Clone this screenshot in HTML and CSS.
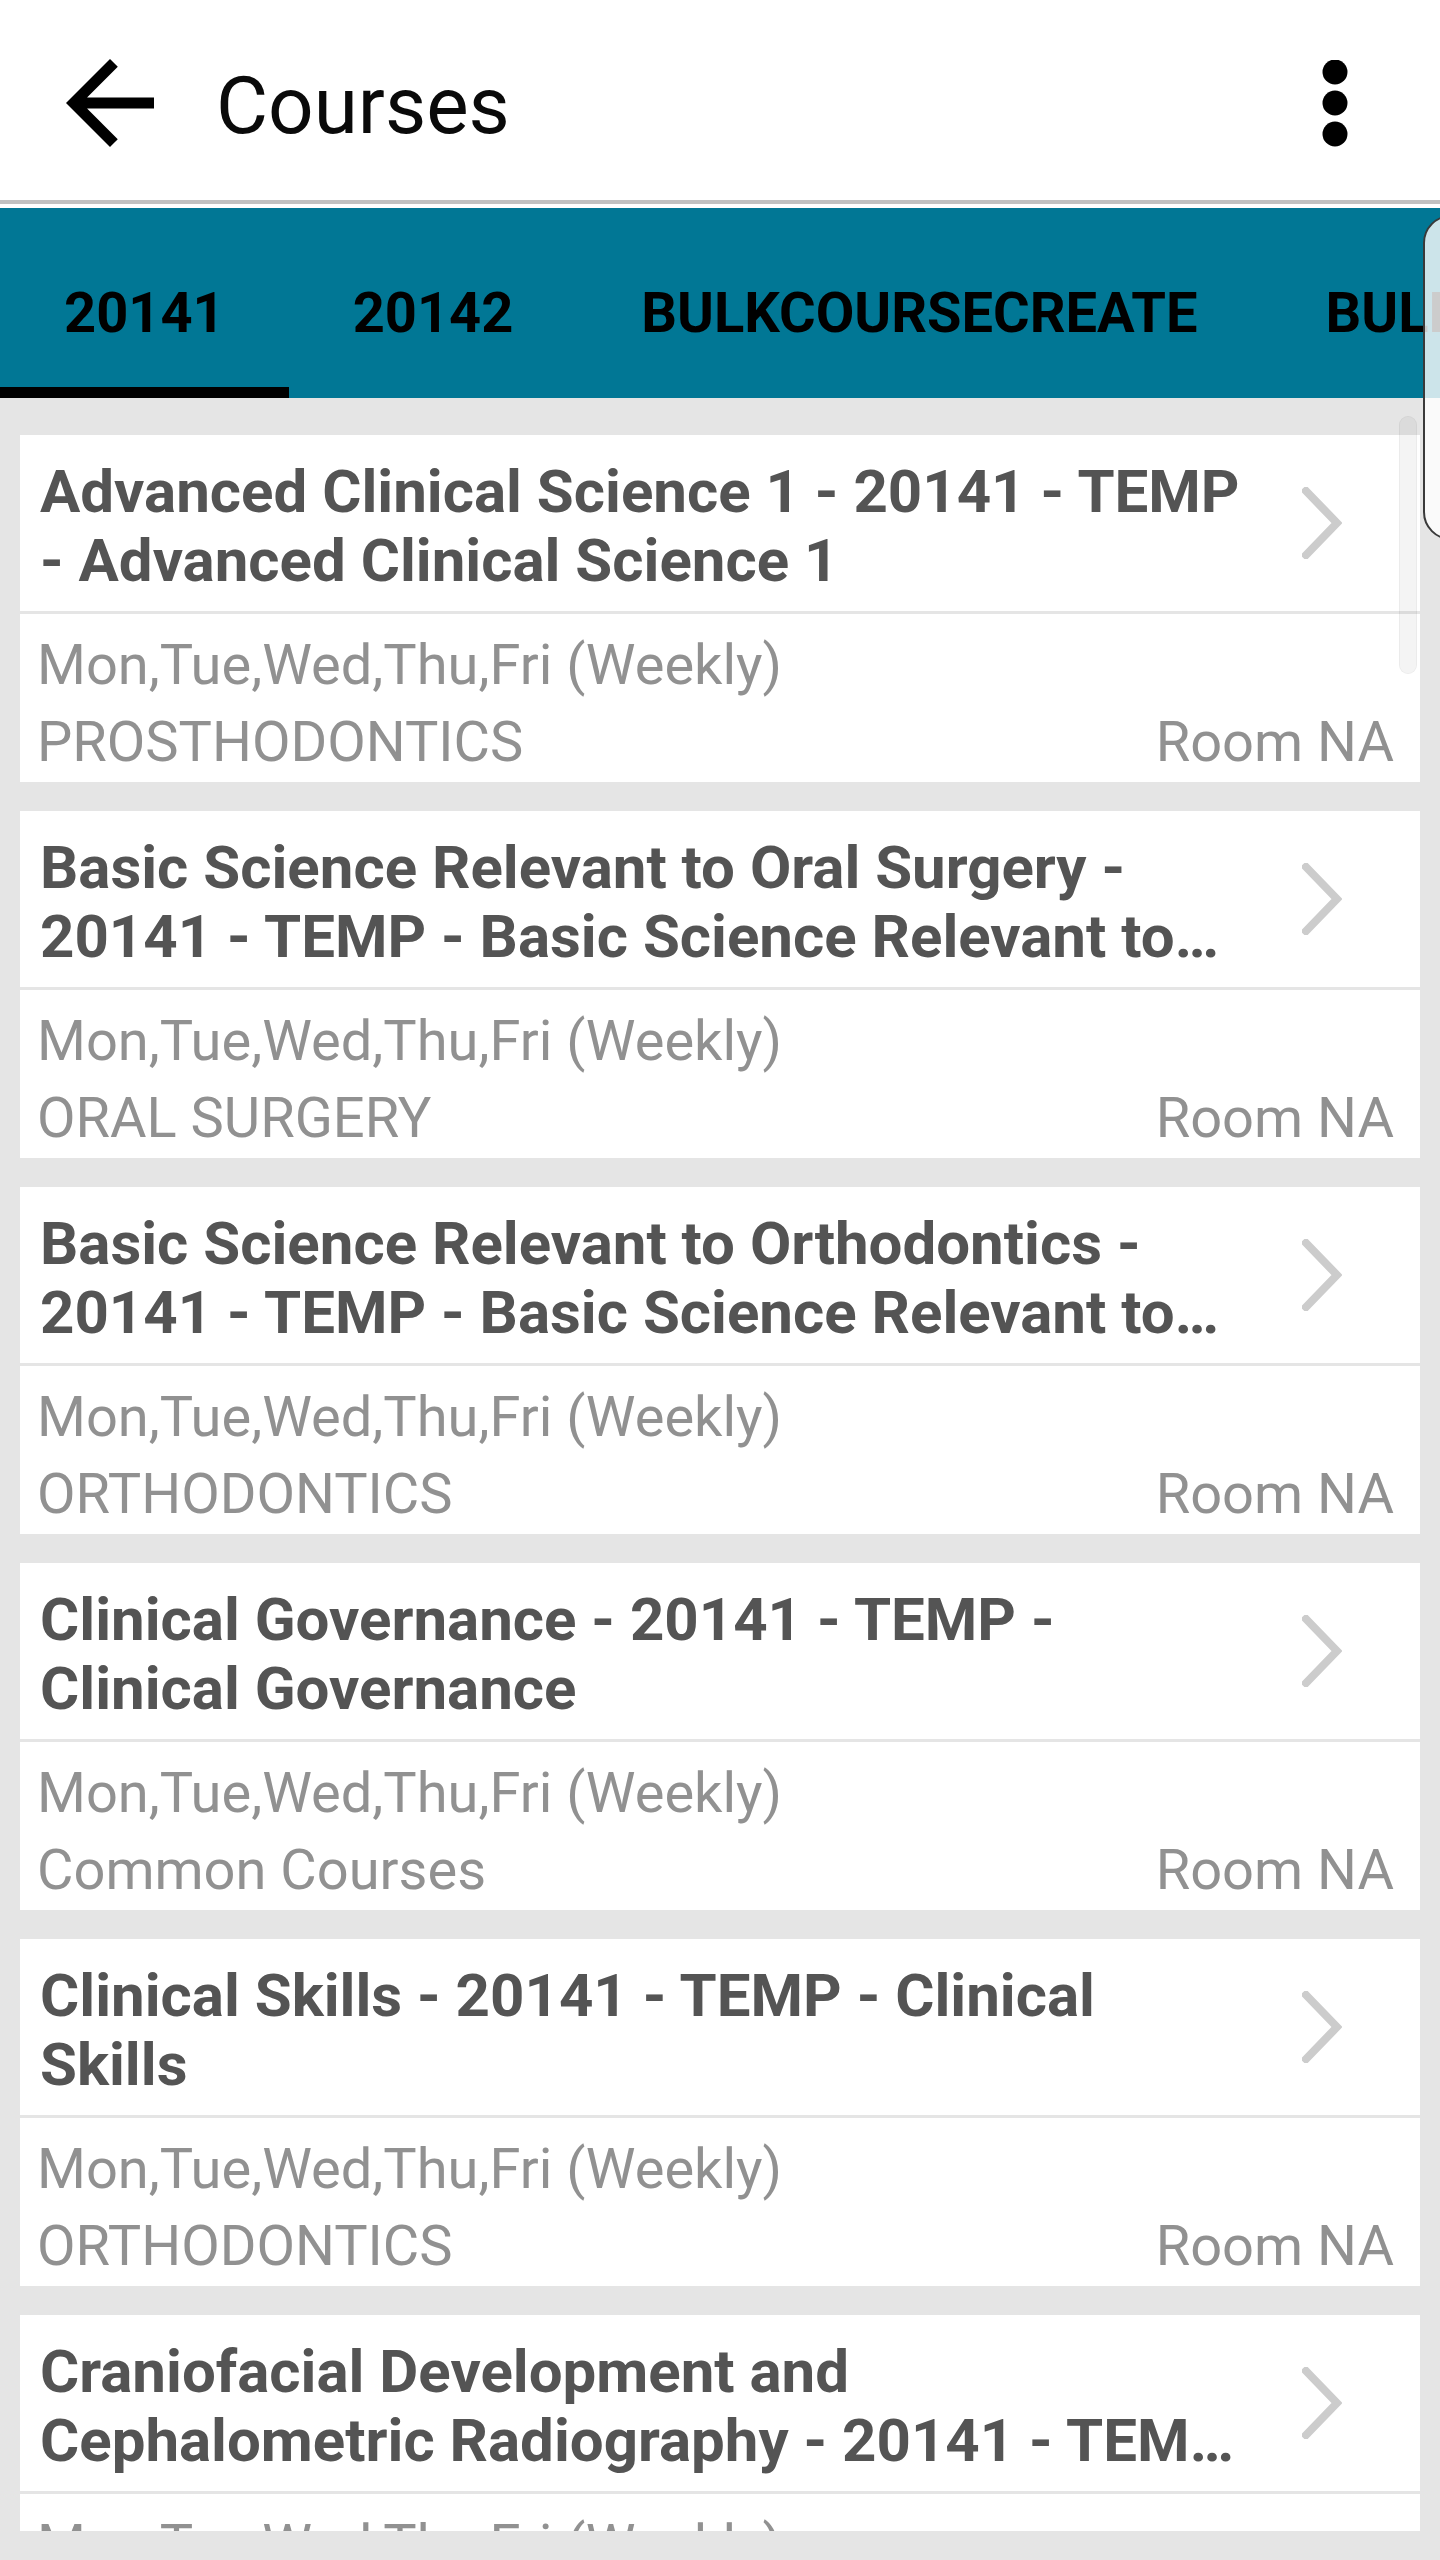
FILE: index.html
```html
<!DOCTYPE html>
<html lang="en">
<head>
<meta charset="utf-8">
<title>Courses</title>
<link rel="stylesheet" href="styles.css">
</head>
<body>
<div class="appbar">
  <header class="toolbar">
    <svg class="back" viewBox="0 0 24 24" aria-label="Back"><path d="M20 11H7.83l5.59-5.59L12 4l-8 8 8 8 1.41-1.41L7.83 13H20v-2z"/></svg>
    <h1 class="title">Courses</h1>
    <svg class="more" viewBox="0 0 26 88" aria-label="More"><circle cx="13" cy="12" r="12.5"/><circle cx="13" cy="43" r="12.5"/><circle cx="13" cy="74" r="12.5"/></svg>
  </header>
</div>
<nav class="tabs">
  <div class="tab active">20141</div>
  <div class="tab">20142</div>
  <div class="tab">BULKCOURSECREATE</div>
  <div class="tab">BULKCOURSECREATE2</div>
</nav>
<main class="list">
  <article class="card">
    <div class="card-head">
      <div class="card-title">Advanced Clinical Science 1 - 20141 - TEMP - Advanced Clinical Science 1</div>
      <div class="chev"><svg viewBox="0 0 40 72"><path d="M4 4 L35 36 L4 68"/></svg></div>
    </div>
    <div class="card-body">
      <div class="sched">Mon,Tue,Wed,Thu,Fri (Weekly)</div>
      <div class="meta"><span>PROSTHODONTICS</span><span>Room NA</span></div>
    </div>
  </article>
  <article class="card">
    <div class="card-head">
      <div class="card-title">Basic Science Relevant to Oral Surgery - 20141 - TEMP - Basic Science Relevant to Oral Surgery</div>
      <div class="chev"><svg viewBox="0 0 40 72"><path d="M4 4 L35 36 L4 68"/></svg></div>
    </div>
    <div class="card-body">
      <div class="sched">Mon,Tue,Wed,Thu,Fri (Weekly)</div>
      <div class="meta"><span>ORAL SURGERY</span><span>Room NA</span></div>
    </div>
  </article>
  <article class="card">
    <div class="card-head">
      <div class="card-title">Basic Science Relevant to Orthodontics - 20141 - TEMP - Basic Science Relevant to Orthodontics</div>
      <div class="chev"><svg viewBox="0 0 40 72"><path d="M4 4 L35 36 L4 68"/></svg></div>
    </div>
    <div class="card-body">
      <div class="sched">Mon,Tue,Wed,Thu,Fri (Weekly)</div>
      <div class="meta"><span>ORTHODONTICS</span><span>Room NA</span></div>
    </div>
  </article>
  <article class="card">
    <div class="card-head">
      <div class="card-title">Clinical Governance - 20141 - TEMP - Clinical Governance</div>
      <div class="chev"><svg viewBox="0 0 40 72"><path d="M4 4 L35 36 L4 68"/></svg></div>
    </div>
    <div class="card-body">
      <div class="sched">Mon,Tue,Wed,Thu,Fri (Weekly)</div>
      <div class="meta"><span>Common Courses</span><span>Room NA</span></div>
    </div>
  </article>
  <article class="card">
    <div class="card-head">
      <div class="card-title">Clinical Skills - 20141 - TEMP - Clinical Skills</div>
      <div class="chev"><svg viewBox="0 0 40 72"><path d="M4 4 L35 36 L4 68"/></svg></div>
    </div>
    <div class="card-body">
      <div class="sched">Mon,Tue,Wed,Thu,Fri (Weekly)</div>
      <div class="meta"><span>ORTHODONTICS</span><span>Room NA</span></div>
    </div>
  </article>
  <article class="card">
    <div class="card-head">
      <div class="card-title">Craniofacial Development and Cephalometric Radiography - 20141 - TEMP - Craniofacial Development and Cephalometric Radiography</div>
      <div class="chev"><svg viewBox="0 0 40 72"><path d="M4 4 L35 36 L4 68"/></svg></div>
    </div>
    <div class="card-body">
      <div class="sched">Mon,Tue,Wed,Thu,Fri (Weekly)</div>
      <div class="meta"><span>ORTHODONTICS</span><span>Room NA</span></div>
    </div>
  </article>
  <div class="scroll-thumb"></div>
</main>
<div class="edge-handle"></div>
</body>
</html>
```
FILE: styles.css
```css
* { box-sizing: border-box; }
html, body {
  margin: 0;
  padding: 0;
}
body {
  width: 1440px;
  height: 2560px;
  overflow: hidden;
  background: #e5e5e5;
  font-family: Roboto, "Noto Sans", "Liberation Sans", sans-serif;
  position: relative;
}
.appbar {
  background: #fff;
  padding-bottom: 4px;
}
.toolbar {
  height: 204px;
  border-bottom: 4px solid #c1c1c1;
  display: flex;
  align-items: center;
  padding: 0 0 0 44px;
}
.back {
  width: 132px;
  height: 132px;
  fill: #000;
  flex: none;
  margin-top: 6px;
}
.title {
  margin: 12px 0 0 40px;
  font-weight: 400;
  font-size: 80px;
  color: #0a0a0a;
  flex: 1;
  line-height: 1;
}
.more {
  width: 26px;
  height: 88px;
  fill: #000;
  margin-right: 92px;
  margin-top: 8px;
}
.tabs {
  height: 190px;
  background: #017795;
  display: flex;
  overflow: hidden;
  white-space: nowrap;
}
.tab {
  min-width: 288px;
  padding: 30px 64px 0;
  display: flex;
  align-items: center;
  justify-content: center;
  font-weight: 700;
  font-size: 56px;
  color: #000;
  flex: none;
  border-bottom: 11px solid transparent;
}
.tab.active {
  border-bottom-color: #000;
}
.list {
  position: relative;
  height: 2133px;
  overflow: hidden;
  padding: 37px 20px 0;
  display: flex;
  flex-direction: column;
  gap: 29px;
}
.card {
  display: flex;
  flex-direction: column;
  gap: 3px;
  flex: none;
}
.card-head {
  background: #fff;
  height: 176px;
  display: flex;
  align-items: center;
  padding: 6px 0 0 20px;
}
.card-title {
  width: 1205px;
  flex: none;
  font-weight: 700;
  font-size: 60px;
  line-height: 69px;
  color: #545454;
  display: -webkit-box;
  -webkit-box-orient: vertical;
  -webkit-line-clamp: 2;
  overflow: hidden;
}
.chev {
  flex: 1;
  display: flex;
  align-items: center;
  padding: 0 0 6px 57px;
}
.chev svg {
  width: 40px;
  height: 72px;
  fill: none;
  stroke: #cccccc;
  stroke-width: 8;
  stroke-linecap: square;
  stroke-linejoin: miter;
}
.card-body {
  background: #fff;
  height: 168px;
  padding: 13px 26px 0 17px;
  font-size: 56px;
  line-height: 77px;
  color: #919191;
}
.meta {
  display: flex;
  justify-content: space-between;
}
.scroll-thumb {
  position: absolute;
  left: 1399px;
  top: 18px;
  width: 18px;
  height: 258px;
  border-radius: 9px;
  background: rgba(0, 0, 0, 0.045);
  border: 1px solid rgba(0, 0, 0, 0.04);
}
.edge-handle {
  position: absolute;
  left: 1423px;
  top: 215px;
  width: 60px;
  height: 325px;
  border: 2px solid #3a3a3a;
  border-radius: 28px;
  background: rgba(255, 255, 255, 0.8);
}
```
